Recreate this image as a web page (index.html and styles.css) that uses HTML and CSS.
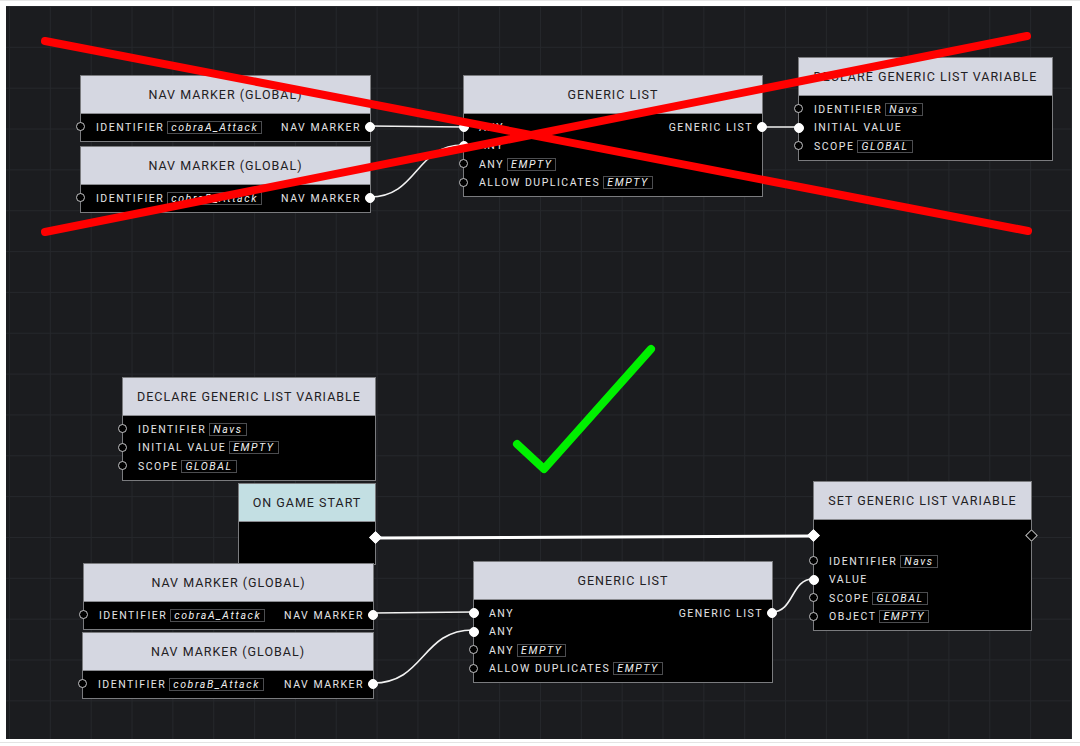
FILE: index.html
```html
<!DOCTYPE html>
<html>
<head>
<meta charset="utf-8">
<link rel="stylesheet" href="styles.css">
</head>
<body>
<div class="page">
  <div class="canvas">
    <svg class="wires" width="1066" height="733" viewBox="6 6 1066 733">
      <g fill="none" stroke="#f2f2f2" stroke-width="1.6">
        <path d="M370 126 L463 127"/>
        <path d="M370 197 C418 197 415 145 463 145"/>
        <path d="M762 127 L798 127"/>
        <path d="M373 613 L473 612"/>
        <path d="M373 683 C425 683 421 630 473 630"/>
        <path d="M772 612 C794 612 791 579 813 579"/>
      </g>
      <path d="M375 538 L813 536" stroke="#ffffff" stroke-width="3" fill="none"/>
    </svg>

    <!-- top (crossed) graph -->
    <div class="node nav-a1">
      <div class="head">NAV MARKER (GLOBAL)</div>
      <div class="body">
        <div class="row split"><span class="port"></span><span>IDENTIFIER<span class="val">cobraA_Attack</span></span><span>NAV MARKER</span><span class="port out on"></span></div>
      </div>
    </div>
    <div class="node nav-a2">
      <div class="head">NAV MARKER (GLOBAL)</div>
      <div class="body">
        <div class="row split"><span class="port"></span><span>IDENTIFIER<span class="val">cobraB_Attack</span></span><span>NAV MARKER</span><span class="port out on"></span></div>
      </div>
    </div>
    <div class="node glist-a">
      <div class="head">GENERIC LIST</div>
      <div class="body">
        <div class="row split"><span class="port on"></span><span>ANY</span><span>GENERIC LIST</span><span class="port out on"></span></div>
        <div class="row"><span class="port on"></span><span>ANY</span></div>
        <div class="row"><span class="port"></span><span>ANY<span class="val">EMPTY</span></span></div>
        <div class="row"><span class="port"></span><span>ALLOW DUPLICATES<span class="val">EMPTY</span></span></div>
      </div>
    </div>
    <div class="node decl-a">
      <div class="head">DECLARE GENERIC LIST VARIABLE</div>
      <div class="body">
        <div class="row"><span class="port"></span><span>IDENTIFIER<span class="val">Navs</span></span></div>
        <div class="row"><span class="port on"></span><span>INITIAL VALUE</span></div>
        <div class="row"><span class="port"></span><span>SCOPE<span class="val">GLOBAL</span></span></div>
      </div>
    </div>

    <!-- bottom (correct) graph -->
    <div class="node decl-b">
      <div class="head">DECLARE GENERIC LIST VARIABLE</div>
      <div class="body">
        <div class="row"><span class="port"></span><span>IDENTIFIER<span class="val">Navs</span></span></div>
        <div class="row"><span class="port"></span><span>INITIAL VALUE<span class="val">EMPTY</span></span></div>
        <div class="row"><span class="port"></span><span>SCOPE<span class="val">GLOBAL</span></span></div>
      </div>
    </div>
    <div class="node start">
      <div class="head event">ON GAME START</div>
      <div class="body tall">
        <div class="exec"><span class="dia out on"></span></div>
      </div>
    </div>
    <div class="node set">
      <div class="head">SET GENERIC LIST VARIABLE</div>
      <div class="body">
        <div class="exec"><span class="dia on"></span><span class="dia out"></span></div>
        <div class="row"><span class="port"></span><span>IDENTIFIER<span class="val">Navs</span></span></div>
        <div class="row"><span class="port on"></span><span>VALUE</span></div>
        <div class="row"><span class="port"></span><span>SCOPE<span class="val">GLOBAL</span></span></div>
        <div class="row"><span class="port"></span><span>OBJECT<span class="val">EMPTY</span></span></div>
      </div>
    </div>
    <div class="node nav-b1">
      <div class="head">NAV MARKER (GLOBAL)</div>
      <div class="body">
        <div class="row split"><span class="port"></span><span>IDENTIFIER<span class="val">cobraA_Attack</span></span><span>NAV MARKER</span><span class="port out on"></span></div>
      </div>
    </div>
    <div class="node nav-b2">
      <div class="head">NAV MARKER (GLOBAL)</div>
      <div class="body">
        <div class="row split"><span class="port"></span><span>IDENTIFIER<span class="val">cobraB_Attack</span></span><span>NAV MARKER</span><span class="port out on"></span></div>
      </div>
    </div>
    <div class="node glist-b">
      <div class="head">GENERIC LIST</div>
      <div class="body">
        <div class="row split"><span class="port on"></span><span>ANY</span><span>GENERIC LIST</span><span class="port out on"></span></div>
        <div class="row"><span class="port on"></span><span>ANY</span></div>
        <div class="row"><span class="port"></span><span>ANY<span class="val">EMPTY</span></span></div>
        <div class="row"><span class="port"></span><span>ALLOW DUPLICATES<span class="val">EMPTY</span></span></div>
      </div>
    </div>

    <svg class="marks" width="1066" height="733" viewBox="6 6 1066 733">
      <g stroke="#ff0000" stroke-width="8" stroke-linecap="round" fill="none">
        <path d="M45 41 L1028 231"/>
        <path d="M45 232 L1027 36"/>
      </g>
      <polyline points="517,444 544,469 651,349" fill="none" stroke="#00f000" stroke-width="8" stroke-linecap="round" stroke-linejoin="round"/>
    </svg>
  </div>
</div>
</body>
</html>
```

FILE: styles.css
```css
html, body {
  margin: 0;
  padding: 0;
  background: #ffffff;
}

.page {
  width: 1080px;
  height: 746px;
  position: relative;
  box-sizing: border-box;
  border-top: 1px solid #e6e6e6;
  padding-top: 5px;
}

.page::after {
  content: "";
  display: block;
  height: 1px;
  margin-top: 3px;
  background: #e3e3e3;
}

.canvas {
  position: relative;
  margin-left: 6px;
  width: 1066px;
  height: 733px;
  overflow: hidden;
  background-color: #1b1c1f;
  background-image:
    linear-gradient(to right, #25272b 1px, transparent 1px),
    linear-gradient(to bottom, #25272b 1px, transparent 1px);
  background-size: 40.85px 40.85px;
  background-position: 3px 0px;
  font-family: Roboto, "Liberation Sans", sans-serif;
}

.wires, .marks {
  position: absolute;
  left: 0;
  top: 0;
}

.marks {
  z-index: 5;
}

.node {
  position: absolute;
  box-sizing: border-box;
  background: #000;
  border: 1px solid #7a7b7e;
  z-index: 2;
}

.head {
  height: 37px;
  line-height: 38px;
  background: #d5d7e1;
  color: #1f2023;
  text-align: center;
  font-size: 12.5px;
  letter-spacing: 1px;
  border-bottom: 1px solid #8a8b90;
  white-space: nowrap;
}

.head.event {
  background: #c3dfe3;
}

.body {
  padding: 4px 0 4px;
}

.body.tall {
  padding-bottom: 10px;
}

.row {
  position: relative;
  height: 18.5px;
  display: flex;
  align-items: center;
  padding: 0 9px 0 15px;
  color: #e4e4e6;
  font-size: 10.5px;
  letter-spacing: 1.5px;
  white-space: nowrap;
}

.row.split {
  justify-content: space-between;
}

.val {
  display: inline-block;
  margin-left: 3px;
  padding: 0 3px 0 3px;
  border: 1px solid #4c4d50;
  font-style: italic;
  line-height: 11px;
  letter-spacing: 1.6px;
  color: #f0f0f0;
}

.port {
  position: absolute;
  left: -5px;
  top: 50%;
  width: 9px;
  height: 9px;
  margin-top: -5px;
  box-sizing: border-box;
  border-radius: 50%;
  border: 1px solid #c4c4c6;
  background: #000;
}

.port.out {
  left: auto;
  right: -5px;
}

.port.on {
  background: #ffffff;
  border-color: #ffffff;
  width: 10px;
  height: 10px;
  margin-top: -5px;
}

.port.on:not(.out) {
  left: -5.5px;
}

.exec {
  position: relative;
  height: 24px;
  margin-bottom: 4px;
}

.dia {
  position: absolute;
  left: -5px;
  top: 7px;
  width: 9px;
  height: 9px;
  box-sizing: border-box;
  transform: rotate(45deg);
  border: 1px solid #bdbdbd;
  background: #000;
}

.dia.out {
  left: auto;
  right: -5px;
}

.dia.on {
  background: #ffffff;
  border-color: #ffffff;
}

/* node placement on the canvas (canvas origin = page 6,6) */
.nav-a1 { left: 74px;  top: 69px;  width: 291px; }
.nav-a2 { left: 74px;  top: 140px; width: 291px; }
.glist-a { left: 457px; top: 69px;  width: 300px; }
.decl-a { left: 792px; top: 51px;  width: 255px; }

.decl-b { left: 116px; top: 371px; width: 254px; }
.start  { left: 232px; top: 477px; width: 138px; }
.set    { left: 807px; top: 475px; width: 219px; }
.nav-b1 { left: 77px;  top: 557px; width: 291px; }
.nav-b2 { left: 76px;  top: 626px; width: 292px; }
.glist-b { left: 467px; top: 555px; width: 300px; }
```
